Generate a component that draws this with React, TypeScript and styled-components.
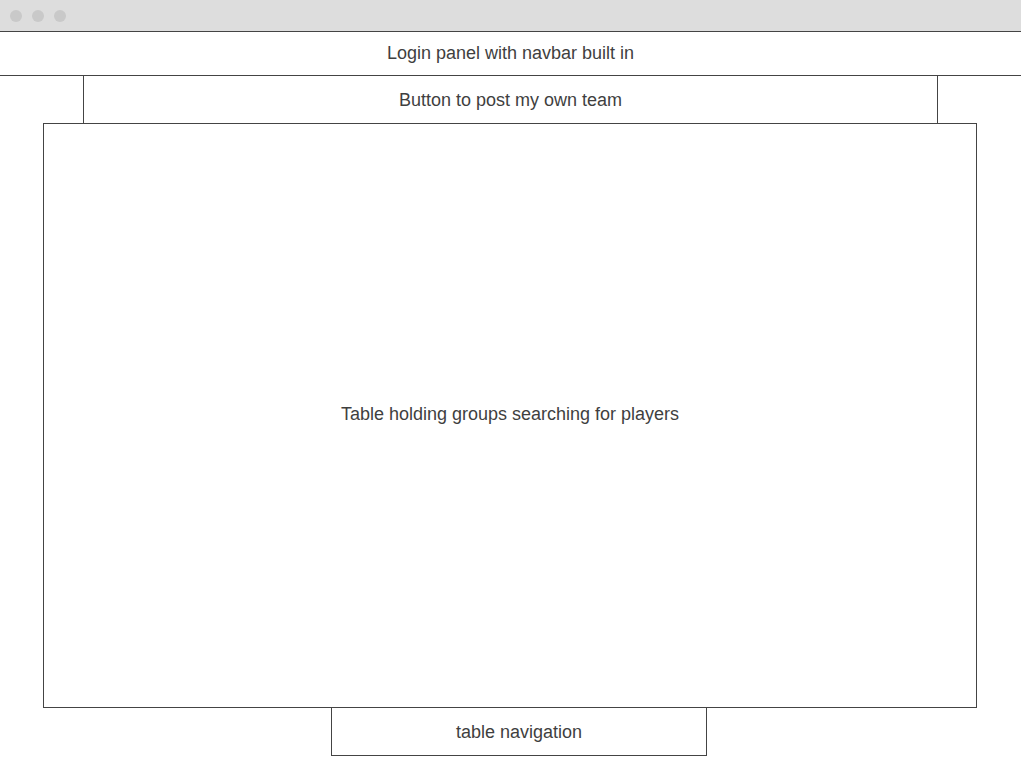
import React from 'react';
import styled, { createGlobalStyle } from 'styled-components';

const GlobalStyle = createGlobalStyle`
  html, body {
    margin: 0;
    padding: 0;
    background: #ffffff;
  }
  body {
    font-family: "Liberation Sans", Arial, sans-serif;
    color: #3f3f3f;
  }
`;

const Window = styled.div`
  display: flex;
  flex-direction: column;
  width: 1021px;
  height: 758px;
  overflow: hidden;
  background: #ffffff;
`;

const TitleBar = styled.div`
  display: flex;
  align-items: center;
  gap: 10px;
  height: 31px;
  padding-left: 10px;
  background: #dddddd;
  border-bottom: 1px solid #444444;
`;

const Dot = styled.span`
  width: 12px;
  height: 12px;
  border-radius: 50%;
  background: #c9c9c9;
`;

const Region = styled.div<{ $left: number; $width: number; $height: number; $sides: string; $shift?: number }>`
  display: flex;
  align-items: center;
  justify-content: center;
  box-sizing: border-box;
  margin-left: ${p => p.$left}px;
  width: ${p => p.$width}px;
  height: ${p => p.$height}px;
  padding-top: ${p => Math.max(p.$shift ?? 0, 0) * 2}px;
  padding-bottom: ${p => Math.max(-(p.$shift ?? 0), 0) * 2}px;
  border-color: #444444;
  border-style: solid;
  border-width: ${p => p.$sides};
  font-size: 18px;
  color: #3f3f3f;
`;

const Overlap = styled(Region)`
  margin-top: -1px;
`;

export default function App() {
  return (
    <>
      <GlobalStyle />
      <Window>
        <TitleBar>
          <Dot />
          <Dot />
          <Dot />
        </TitleBar>
        <Region $left={0} $width={1021} $height={44} $sides="0 0 1px 0">
          Login panel with navbar built in
        </Region>
        <Region $left={83} $width={855} $height={48} $sides="0 1px 1px 1px" $shift={1}>
          Button to post my own team
        </Region>
        <Overlap $left={43} $width={934} $height={585} $sides="1px" $shift={-1}>
          Table holding groups searching for players
        </Overlap>
        <Overlap $left={331} $width={376} $height={49} $sides="1px" $shift={1}>
          table navigation
        </Overlap>
      </Window>
    </>
  );
}
